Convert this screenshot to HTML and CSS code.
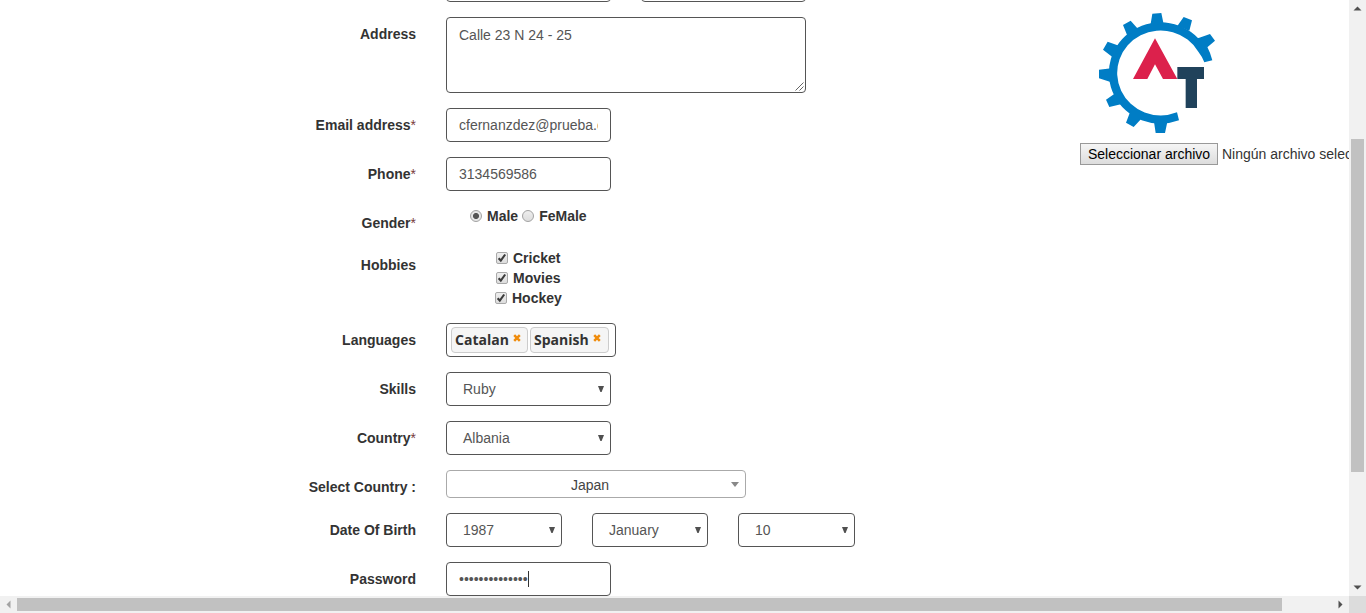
FILE: index.html
```html
<!DOCTYPE html>
<html lang="en">
<head>
<meta charset="utf-8">
<title>Register</title>
<link rel="stylesheet" href="styles.css">
</head>
<body>
<div class="window">
  <main class="view">
    <form class="form">
      <div class="row row-names"><span class="label"></span><div class="field"></div><div class="field"></div></div>
      <div class="row"><span class="label">Address</span><div class="field area">Calle 23 N 24 - 25<svg class="grip" width="9" height="9" viewBox="0 0 9 9"><path d="M.5 8.5l8-8M4.5 8.5l4-4" stroke="#555" fill="none" stroke-width=".9"/></svg></div></div>
      <div class="row"><span class="label">Email address<span class="req">*</span></span><div class="field"><span class="value">cfernanzdez@prueba.com</span></div></div>
      <div class="row"><span class="label">Phone<span class="req">*</span></span><div class="field"><span class="value">3134569586</span></div></div>
      <div class="row row-gender"><span class="label">Gender<span class="req">*</span></span>
        <div class="radios"><i class="radio on"></i><b>Male</b><i class="radio"></i><b>FeMale</b></div></div>
      <div class="row"><span class="label">Hobbies</span>
        <div class="checks">
          <div class="check"><svg class="box" viewBox="0 0 10 10"><path d="M1.6 5.2l2.2 2.3 4.4-6" /></svg><b>Cricket</b></div>
          <div class="check"><svg class="box" viewBox="0 0 10 10"><path d="M1.6 5.2l2.2 2.3 4.4-6" /></svg><b>Movies</b></div>
          <div class="check check-last"><svg class="box" viewBox="0 0 10 10"><path d="M1.6 5.2l2.2 2.3 4.4-6" /></svg><b>Hockey</b></div>
        </div></div>
      <div class="row"><span class="label">Languages</span>
        <div class="field tags">
          <span class="tag tag-a">Catalan<svg class="x" viewBox="0 0 8 8"><path d="M1.2 1.2l5.6 5.6M6.8 1.2L1.2 6.8"/></svg></span>
          <span class="tag tag-b">Spanish<svg class="x" viewBox="0 0 8 8"><path d="M1.2 1.2l5.6 5.6M6.8 1.2L1.2 6.8"/></svg></span>
        </div></div>
      <div class="row"><span class="label">Skills</span><div class="field select">Ruby<i class="arrow"></i></div></div>
      <div class="row"><span class="label">Country<span class="req">*</span></span><div class="field select">Albania<i class="arrow"></i></div></div>
      <div class="row row-combo"><span class="label">Select Country :</span><div class="combo"><span class="combo-text">Japan</span><i class="combo-arrow"></i></div></div>
      <div class="row"><span class="label">Date Of Birth</span>
        <div class="field select date">1987<i class="arrow"></i></div>
        <div class="field select date">January<i class="arrow"></i></div>
        <div class="field select date date-day">10<i class="arrow"></i></div></div>
      <div class="row"><span class="label">Password</span><div class="field">••••••••••••••<i class="caret"></i></div></div>
    </form>
    <aside class="photo">
      <svg class="logo" width="130" height="130" viewBox="0 0 390 390">
        <g fill="#007dc5">
          <path d="M367 166Q362 145 352 126L335 112A155 152 0 1 0 267 346L261 322A130.500 127.500 0 1 1 325 140Q337 155 343 172Z"/>
          <path d="M187 26L214 24 221 58 181 62ZM99 60L122 47 146 74 112 92ZM281 36L306 46 298 77 262 63ZM360 87L375 107 352 127 330 120 322 100 328 98ZM53 110L89 123 70 158 39 134ZM27 194L64 190 64 232 27 220ZM48 284L78 263 99 296 58 306ZM118 327L126 310 154 341 131 366 108 353ZM191 344L234 341 225 384 197 384Z"/>
        </g>
        <path fill="#dc214c" d="M129 222L195 100 262 222H219L195 178 172 222Z"/>
        <path fill="#20425b" d="M262 186h80v36h-21v87h-34v-87h-25z"/>
      </svg>
      <div class="file"><span class="file-button">Seleccionar archivo</span><span class="file-name">Ningún archivo seleccionado</span></div>
    </aside>
  </main>
  <div class="vbar"><svg width="9" height="5" viewBox="0 0 9 5"><path d="M.5 4.5L4.5.5l4 4z" fill="#505050"/></svg><div class="vthumb"></div><svg class="down" width="9" height="5" viewBox="0 0 9 5"><path d="M.5.5h8l-4 4z" fill="#505050"/></svg></div>
  <div class="hbar"><svg width="5" height="9" viewBox="0 0 5 9"><path d="M4.5.5v8l-4-4z" fill="#a3a3a3"/></svg><div class="hthumb"></div><svg class="right" width="5" height="9" viewBox="0 0 5 9"><path d="M.5.5v8l4-4z" fill="#505050"/></svg></div>
  <div class="corner"></div>
</div>
</body>
</html>
```
FILE: styles.css
```css
* { box-sizing: border-box; }
body { margin: 0; background: #fff; color: #333; font: 14px/20px "Liberation Sans", Arial, sans-serif; overflow: hidden; }
.window { display: grid; grid-template: 596px 17px / 1349px 17px; width: 1366px; height: 613px; }
.view { display: flex; overflow: hidden; }
.form { width: 1080px; flex: none; display: flex; flex-direction: column; gap: 15px; margin-top: -32px; }
.row { display: flex; flex: none; gap: 30px; align-items: flex-start; }
.label { width: 416px; padding-top: 7px; text-align: right; font-weight: bold; min-height: 27px; }
.req { font-weight: normal; color: #7a3a3a; }
.field { width: 165px; height: 34px; border: 1px solid #555; border-radius: 4px; padding: 6px 12px; color: #555; white-space: nowrap; display: flex; }
.value { overflow: hidden; }
.area { width: 360px; height: 76px; padding-top: 7px; position: relative; }
.grip { position: absolute; right: 1px; bottom: 1px; }
.row-gender { height: 27px; }
.radios { display: flex; align-items: center; padding-left: 24px; height: 20px; }
.radios b { margin: 0 4px 0 5px; }
.radio { width: 12px; height: 12px; border: 1px solid #a2a2a2; border-radius: 50%; background: linear-gradient(#eee, #ddd); }
.radio.on { background: radial-gradient(circle, #555 0 2.7px, #e7e7e7 3.3px); }
.checks { padding-left: 50px; }
.check { display: flex; align-items: center; gap: 5px; height: 20px; }
.check-last { margin-left: -1px; }
.box { width: 12px; height: 12px; border: 1px solid #a9a9a9; border-radius: 2px; background: linear-gradient(#eee, #ddd); fill: none; stroke: #3c3c3c; stroke-width: 2.1; }
.tags { width: 170px; padding: 3px 0 0 4px; gap: 2px; }
.tag { height: 26px; border: 1px solid #ccc; border-radius: 4px; background: #f5f5f5; color: #333; font: bold 14px/24px "Open Sans", sans-serif; padding-left: 3px; display: flex; }
.tag-a { width: 77px; }
.tag-b { width: 79px; }
.x { width: 8px; height: 8px; margin: 6px 0 0 4.5px; stroke: #f08c0c; stroke-width: 2.5; fill: none; }
.select { padding-left: 16px; }
.arrow { margin: 7px -6px 0 auto; width: 6px; height: 6px; background: #505050; clip-path: polygon(0 0, 100% 0, 60% 100%, 40% 100%); }
.row-combo { height: 28px; }
.combo { width: 300px; height: 28px; border: 1px solid #aaa; border-radius: 4px; display: flex; color: #444; padding: 4px 6px 0 0; }
.combo-text { flex: 1; text-align: center; padding-left: 2px; line-height: 20px; }
.combo-arrow { margin-top: 7px; width: 8px; height: 5px; background: #888; clip-path: polygon(0 0, 100% 0, 50% 100%); }
.date { width: 116px; }
.date-day { width: 117px; }
.caret { width: 1px; height: 16px; margin-top: 2px; background: #333; }
.photo { padding: 5px 0 0; width: 340px; flex: none; }
.logo { display: block; margin-left: 10px; }
.file { display: flex; margin-top: 8px; white-space: nowrap; gap: 4px; line-height: 21px; }
.file-button { width: 138px; height: 22px; border: 1px solid #999; background: linear-gradient(#f5f5f5, #ddd); text-align: center; color: #000; }
.file-name { padding-top: 1px; }
.vbar, .hbar { background: #f1f1f1; display: flex; align-items: center; }
.vbar { flex-direction: column; padding: 6px 0; }
.vthumb { width: 13px; height: 333px; background: #c1c1c1; margin-top: 128px; }
.down { margin-top: auto; }
.hbar { padding: 0 6px; }
.hthumb { height: 13px; width: 1265px; margin-left: 6px; background: #c1c1c1; }
.right { margin-left: auto; }
.corner { background: #dcdcdc; }
```
